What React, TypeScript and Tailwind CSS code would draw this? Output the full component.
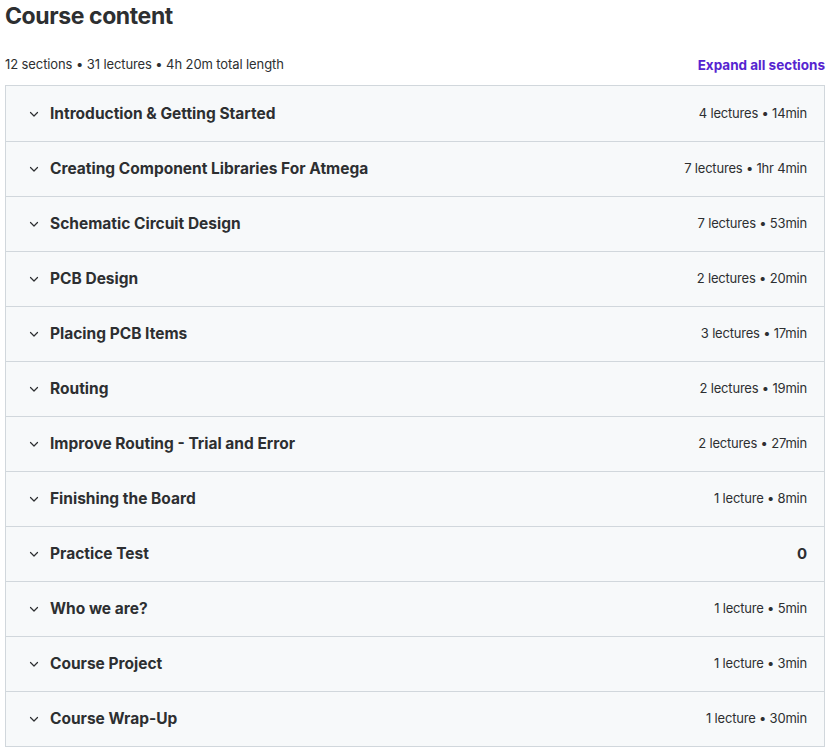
import React from 'react';

type Section = { title: string; meta: string; bold?: boolean };

const sections: Section[] = [
  { title: 'Introduction & Getting Started', meta: '4 lectures • 14min' },
  { title: 'Creating Component Libraries For Atmega', meta: '7 lectures • 1hr 4min' },
  { title: 'Schematic Circuit Design', meta: '7 lectures • 53min' },
  { title: 'PCB Design', meta: '2 lectures • 20min' },
  { title: 'Placing PCB Items', meta: '3 lectures • 17min' },
  { title: 'Routing', meta: '2 lectures • 19min' },
  { title: 'Improve Routing - Trial and Error', meta: '2 lectures • 27min' },
  { title: 'Finishing the Board', meta: '1 lecture • 8min' },
  { title: 'Practice Test', meta: '0', bold: true },
  { title: 'Who we are?', meta: '1 lecture • 5min' },
  { title: 'Course Project', meta: '1 lecture • 3min' },
  { title: 'Course Wrap-Up', meta: '1 lecture • 30min' },
];

const Chevron = () => (
  <svg width="12" height="12" viewBox="0 0 12 12" fill="none" className="shrink-0 text-[#2d2f31]">
    <polyline points="2.5,4.5 6,8 9.5,4.5" stroke="currentColor" strokeWidth="1.2" strokeLinecap="round" strokeLinejoin="round" />
  </svg>
);

export default function App() {
  return (
    <div className="w-[830px] h-[756px] bg-white text-[#2d2f31] font-['Inter','Liberation_Sans',sans-serif]">
      <div className="px-[5px]">
        <h2 className="text-[23px] font-bold leading-[32px] tracking-[-0.4px]">Course content</h2>

        {/* Summary row */}
        <div className="flex items-center justify-between mt-[13px] h-[40px]">
          <span className="text-[13px] text-[#2d2f31] tracking-[-0.1px]">12 sections • 31 lectures • 4h 20m total length</span>
          <button className="text-[13.5px] font-bold text-[#5624d0]">Expand all sections</button>
        </div>

        {/* Sections list */}
        <div className="border border-[#d1d7dc] bg-[#f7f9fa]">
          {sections.map((s, i) => (
            <div
              key={i}
              className={`flex items-center justify-between h-[55px] pl-[22px] pr-[17px] ${i > 0 ? 'border-t border-[#d1d7dc]' : ''}`}
            >
              <div className="flex items-center gap-[10px]">
                <Chevron />
                <span className="text-[15.5px] font-bold">{s.title}</span>
              </div>
              <span
                className={
                  s.bold
                    ? 'text-[15px] font-bold'
                    : 'text-[13px] text-[#2d2f31] tracking-[-0.2px]'
                }
              >
                {s.meta}
              </span>
            </div>
          ))}
        </div>
      </div>
    </div>
  );
}
